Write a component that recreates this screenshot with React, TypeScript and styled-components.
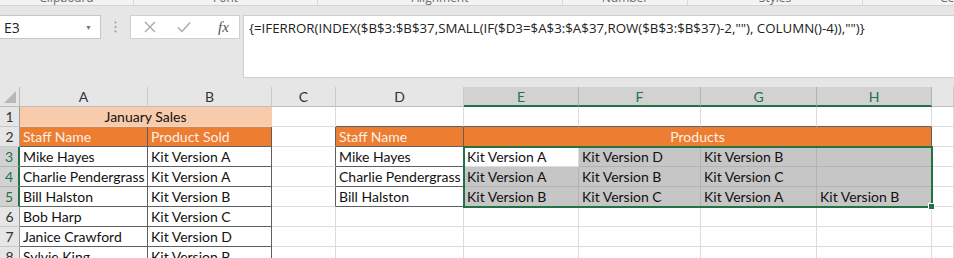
import React, {ReactElement} from 'react'
import styled, {createGlobalStyle, css} from 'styled-components'

const GlobalStyle = createGlobalStyle`
    html, body {
        margin: 0;
        padding: 0;
        background: #e6e6e6;
        overflow: hidden;
    }
`

const GREEN = '#217346'
const DARK = '#5e5e5e'
const GRID = '#dcdcdc'

const Page = styled.div`
    width: 954px;
    height: 258px;
    overflow: hidden;
    background: #e6e6e6;
    font-family: 'Open Sans', 'Noto Sans', sans-serif;
`

const Ribbon = styled.div`
    height: 5px;
    background: #f3f3f3;
    border-bottom: 1px solid #d5d5d5;
    display: flex;
    overflow: hidden;
`

const RibbonGroup = styled.div<{$w: number}>`
    width: ${({$w}) => $w}px;
    flex: none;
    border-right: 1px solid #d8d8d8;
    height: 5px;
    text-align: center;
    font-size: 12px;
    line-height: 1;
    color: #6b6b6b;

    > span {
        display: block;
        margin-top: -8px;
    }
`

const FormulaRow = styled.div`
    height: 81px;
    display: flex;
    align-items: flex-start;
    padding-top: 9px;
    box-sizing: border-box;
`

const NameBox = styled.div`
    width: 101px;
    height: 24px;
    box-sizing: border-box;
    background: #fff;
    border: 1px solid #c6c6c6;
    border-left: none;
    display: flex;
    align-items: center;
    justify-content: space-between;
    padding: 0 8px 0 4px;
    font-size: 14px;
    color: #222;

    > .arrow {
        font-size: 7px;
        color: #777;
    }
`

const Grip = styled.div`
    width: 29px;
    height: 24px;
    display: flex;
    align-items: center;
    justify-content: center;

    > svg {
        display: block;
    }
`

const FxBox = styled.div`
    width: 110px;
    height: 24px;
    box-sizing: border-box;
    background: #fff;
    border: 1px solid #d0d0d0;
    display: flex;
    align-items: center;
    padding-left: 12px;
    gap: 19px;

    > .fx {
        font-family: 'Liberation Serif', 'DejaVu Serif', serif;
        font-style: italic;
        font-size: 15px;
        color: #555;
        margin-left: 7px;
    }
`

const FormulaBox = styled.div`
    margin-left: 3px;
    flex: 1;
    height: 63px;
    box-sizing: border-box;
    background: #fff;
    border: 1px solid #cfcfcf;
    border-right: none;
    padding: 3px 0 0 5px;
    font-size: 13.3px;
    color: #222;
    white-space: nowrap;
`

const Sheet = styled.div`
    position: relative;
    display: grid;
    grid-template-columns: 20px 128px 124px 64px 128px 115px 122px 116px 115px 1fr;
    grid-auto-rows: 20px;
    background: #fff;
    font-family: 'Lato', 'Open Sans', sans-serif;
    font-size: 14px;
    color: #111;
`

const Corner = styled.div`
    background: #e6e6e6;
    border-right: 1px solid #bdbdbd;
    border-bottom: 1px solid #bdbdbd;
    box-sizing: border-box;
    position: relative;

    &::after {
        content: '';
        position: absolute;
        right: 3px;
        bottom: 3px;
        width: 0;
        height: 0;
        border-left: 12px solid transparent;
        border-bottom: 12px solid #b7b7b7;
    }
`

const ColHead = styled.div<{$sel?: boolean}>`
    box-sizing: border-box;
    display: flex;
    align-items: center;
    justify-content: center;
    font-size: 14px;
    background: ${({$sel}) => ($sel ? '#d2d2d2' : '#e6e6e6')};
    color: ${({$sel}) => ($sel ? GREEN : '#333')};
    border-right: 1px solid ${({$sel}) => ($sel ? '#b2b2b2' : '#c9c9c9')};
    border-bottom: ${({$sel}) => ($sel ? `2px solid ${GREEN}` : '1px solid #bdbdbd')};
`

const RowHead = styled.div<{$sel?: boolean}>`
    box-sizing: border-box;
    display: flex;
    align-items: center;
    justify-content: center;
    font-size: 14px;
    background: ${({$sel}) => ($sel ? '#d2d2d2' : '#e6e6e6')};
    color: ${({$sel}) => ($sel ? GREEN : '#333')};
    border-bottom: 1px solid ${({$sel}) => ($sel ? '#b2b2b2' : '#c9c9c9')};
    border-right: ${({$sel}) => ($sel ? `2px solid ${GREEN}` : '1px solid #9a9a9a')};
`

type Fill = 'none' | 'peach' | 'orange' | 'sel'

const fills: Record<Fill, string> = {
    none: '#fff',
    peach: '#f8cbad',
    orange: '#ed7d31',
    sel: '#c6c6c6',
}

const Cell = styled.div<{$fill?: Fill; $span?: number; $center?: boolean; $r?: boolean; $b?: boolean}>`
    box-sizing: border-box;
    grid-column: span ${({$span}) => $span ?? 1};
    padding: 0 3px;
    display: flex;
    align-items: center;
    justify-content: ${({$center}) => ($center ? 'center' : 'flex-start')};
    white-space: nowrap;
    overflow: hidden;
    background: ${({$fill}) => fills[$fill ?? 'none']};
    color: ${({$fill}) => ($fill === 'orange' ? '#fdf0e6' : '#111')};
    border-right: 1px solid ${({$fill, $r}) => ($r ? DARK : $fill === 'sel' ? '#b3b3b3' : $fill === 'peach' ? 'transparent' : GRID)};
    border-bottom: 1px solid ${({$fill, $b}) => ($b ? DARK : $fill === 'sel' ? '#b3b3b3' : $fill === 'orange' ? 'transparent' : GRID)};
    ${({$fill}) => $fill === 'orange' && css`
        border-right-color: ${DARK};
    `}
`

// selection frame floats over the E3:H5 cells
const Selection = styled.div`
    position: absolute;
    left: 463px;
    top: 59px;
    width: 470px;
    height: 62px;
    box-sizing: border-box;
    border: 2px solid ${GREEN};
    pointer-events: none;

    &::after {
        content: '';
        position: absolute;
        right: -4px;
        bottom: -4px;
        width: 5px;
        height: 5px;
        background: ${GREEN};
        border: 1px solid #fff;
    }
`

const ribbonGroups = [
    {label: 'Clipboard', w: 133},
    {label: 'Font', w: 183},
    {label: 'Alignment', w: 244},
    {label: 'Number', w: 124},
    {label: 'Styles', w: 174},
    {label: 'Cells', w: 180},
]

const columns = ['A', 'B', 'C', 'D', 'E', 'F', 'G', 'H', '']

const salesRows = [
    ['Mike Hayes', 'Kit Version A'],
    ['Charlie Pendergrass', 'Kit Version A'],
    ['Bill Halston', 'Kit Version B'],
    ['Bob Harp', 'Kit Version C'],
    ['Janice Crawford', 'Kit Version D'],
    ['Sylvie King', 'Kit Version B'],
]

const products: Record<number, string[]> = {
    0: ['Kit Version A', 'Kit Version D', 'Kit Version B', ''],
    1: ['Kit Version A', 'Kit Version B', 'Kit Version C', ''],
    2: ['Kit Version B', 'Kit Version C', 'Kit Version A', 'Kit Version B'],
}

const FORMULA = '{=IFERROR(INDEX($B$3:$B$37,SMALL(IF($D3=$A$3:$A$37,ROW($B$3:$B$37)-2,""), COLUMN()-4)),"")}'

function CrossIcon() {
    return (
        <svg width="14" height="14" viewBox="0 0 14 14">
            <path d="M2 2 L12 12 M12 2 L2 12" stroke="#a6a6a6" strokeWidth="1.3" fill="none"/>
        </svg>
    )
}

function CheckIcon() {
    return (
        <svg width="16" height="14" viewBox="0 0 16 14">
            <path d="M2 7.5 L6 11.5 L14 2.5" stroke="#a6a6a6" strokeWidth="1.3" fill="none"/>
        </svg>
    )
}

export default function App(): ReactElement {
    const dataNames = ['Mike Hayes', 'Charlie Pendergrass', 'Bill Halston']

    return (
        <Page>
            <GlobalStyle/>
            <Ribbon>
                {ribbonGroups.map(g => (
                    <RibbonGroup key={g.label} $w={g.w}><span>{g.label}</span></RibbonGroup>
                ))}
            </Ribbon>
            <FormulaRow>
                <NameBox>E3<span className={'arrow'}>▼</span></NameBox>
                <Grip>
                    <svg width="3" height="12" viewBox="0 0 3 12">
                        <circle cx="1.5" cy="1.5" r="1" fill="#9a9a9a"/>
                        <circle cx="1.5" cy="6" r="1" fill="#9a9a9a"/>
                        <circle cx="1.5" cy="10.5" r="1" fill="#9a9a9a"/>
                    </svg>
                </Grip>
                <FxBox>
                    <CrossIcon/>
                    <CheckIcon/>
                    <span className={'fx'}>fx</span>
                </FxBox>
                <FormulaBox>{FORMULA}</FormulaBox>
            </FormulaRow>
            <Sheet>
                <Corner/>
                {columns.map((c, i) => (
                    <ColHead key={i} $sel={i >= 4 && i <= 7}>{c}</ColHead>
                ))}

                {/* row 1 */}
                <RowHead>1</RowHead>
                <Cell $fill={'peach'} $span={2} $center>January Sales</Cell>
                <Cell/>
                <Cell $b/>
                <Cell $b/>
                <Cell $b/>
                <Cell $b/>
                <Cell $b/>
                <Cell/>

                {/* row 2 */}
                <RowHead>2</RowHead>
                <Cell $fill={'orange'} $b>Staff Name</Cell>
                <Cell $fill={'orange'} $b>Product Sold</Cell>
                <Cell $r/>
                <Cell $fill={'orange'} $b>Staff Name</Cell>
                <Cell $fill={'orange'} $span={4} $center>Products</Cell>
                <Cell/>

                {salesRows.map((row, i) => {
                    const prod = products[i]
                    return (
                        <React.Fragment key={i}>
                            <RowHead $sel={i < 3}>{i + 3}</RowHead>
                            <Cell $r $b>{row[0]}</Cell>
                            <Cell $r $b>{row[1]}</Cell>
                            <Cell $r={i < 3}/>
                            {prod ? <Cell $r $b>{dataNames[i]}</Cell> : <Cell/>}
                            {prod
                                ? prod.map((p, j) => (
                                    <Cell key={j} $fill={i === 0 && j === 0 ? 'none' : 'sel'}>{p}</Cell>
                                ))
                                : [0, 1, 2, 3].map(j => <Cell key={j}/>)}
                            <Cell/>
                        </React.Fragment>
                    )
                })}

                <Selection/>
            </Sheet>
        </Page>
    )
}
